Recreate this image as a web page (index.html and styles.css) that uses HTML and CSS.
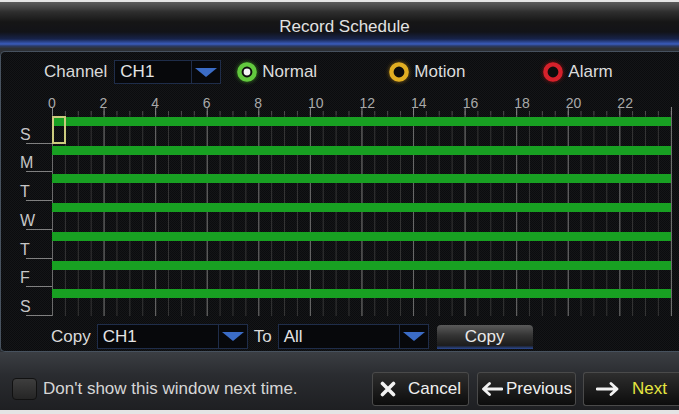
FILE: index.html
```html
<!DOCTYPE html>
<html lang="en">
  <head>
    <meta charset="UTF-8" />
    <meta name="viewport" content="width=device-width, initial-scale=1.0" />
    <title>Record Schedule</title>
    <link rel="stylesheet" href="styles.css">
  </head>
  <body>
    <div class="screen">
      <div class="title-bar">Record Schedule</div>

      <div class="panel">
        <div class="channel-row">
          <span class="label">Channel</span>
          <div class="select channel-select">
            <span class="value">CH1</span>
            <span class="arrow">
              <svg width="22" height="9" viewBox="0 0 22 9"><polygon points="0,0 22,0 11,9" fill="#3b6cc6" /></svg>
            </span>
          </div>

          <div class="mode mode-normal">
            <svg width="22" height="22" viewBox="0 0 22 22">
              <circle cx="11" cy="11" r="7.6" fill="#0c0c0c" stroke="#62c93e" stroke-width="4.4" />
              <circle cx="11" cy="11" r="3.4" fill="#f4f4f4" />
            </svg>
            <span>Normal</span>
          </div>
          <div class="mode mode-motion">
            <svg width="22" height="22" viewBox="0 0 22 22">
              <circle cx="11" cy="11" r="7.6" fill="#0c0c0c" stroke="#e1ae22" stroke-width="4.4" />
            </svg>
            <span>Motion</span>
          </div>
          <div class="mode mode-alarm">
            <svg width="22" height="22" viewBox="0 0 22 22">
              <circle cx="11" cy="11" r="7.6" fill="#0c0c0c" stroke="#d5212b" stroke-width="4.4" />
            </svg>
            <span>Alarm</span>
          </div>
        </div>

        <div class="scale-row">
          <div class="day-col"></div>
          <div class="scale">
            <span>0</span><span>2</span><span>4</span><span>6</span><span>8</span>
            <span class="wide">10</span><span class="wide">12</span><span class="wide">14</span>
            <span class="wide">16</span><span class="wide">18</span><span class="wide">20</span>
            <span class="wide">22</span>
          </div>
        </div>

        <div class="schedule">
          <div class="day-row">
            <div class="day"><span>S</span></div>
            <div class="slots"><div class="bar"></div><div class="cursor"></div></div>
          </div>
          <div class="day-row">
            <div class="day"><span>M</span></div>
            <div class="slots"><div class="bar"></div></div>
          </div>
          <div class="day-row">
            <div class="day"><span>T</span></div>
            <div class="slots"><div class="bar"></div></div>
          </div>
          <div class="day-row">
            <div class="day"><span>W</span></div>
            <div class="slots"><div class="bar"></div></div>
          </div>
          <div class="day-row">
            <div class="day"><span>T</span></div>
            <div class="slots"><div class="bar"></div></div>
          </div>
          <div class="day-row">
            <div class="day"><span>F</span></div>
            <div class="slots"><div class="bar"></div></div>
          </div>
          <div class="day-row">
            <div class="day"><span>S</span></div>
            <div class="slots"><div class="bar"></div></div>
          </div>
        </div>

        <div class="copy-row">
          <span class="label">Copy</span>
          <div class="select copy-select">
            <span class="value">CH1</span>
            <span class="arrow">
              <svg width="22" height="9" viewBox="0 0 22 9"><polygon points="0,0 22,0 11,9" fill="#3b6cc6" /></svg>
            </span>
          </div>
          <span class="label to-label">To</span>
          <div class="select copy-select">
            <span class="value">All</span>
            <span class="arrow">
              <svg width="22" height="9" viewBox="0 0 22 9"><polygon points="0,0 22,0 11,9" fill="#3b6cc6" /></svg>
            </span>
          </div>
          <button class="copy-btn">Copy</button>
        </div>
      </div>

      <div class="footer">
        <span class="checkbox"></span>
        <span class="footer-text">Don't show this window next time.</span>

        <div class="actions">
          <button class="btn btn-cancel">
            <svg width="16" height="16" viewBox="0 0 16 16"><path d="M2.5 2.5L13.5 13.5M13.5 2.5L2.5 13.5" stroke="#f2f2f2" stroke-width="3.6" stroke-linecap="round" /></svg>
            Cancel
          </button>
          <button class="btn btn-prev">
            <svg width="22" height="14" viewBox="0 0 22 14"><path d="M21 7H3M8.5 1.5L2.5 7l6 5.5" stroke="#f2f2f2" stroke-width="2.8" fill="none" stroke-linecap="round" stroke-linejoin="round" /></svg>
            Previous
          </button>
          <button class="btn btn-next">
            <svg width="24" height="14" viewBox="0 0 24 14"><path d="M1 7h20M15 1.5L21 7l-6 5.5" stroke="#f2f2f2" stroke-width="2.8" fill="none" stroke-linecap="round" stroke-linejoin="round" /></svg>
            <span class="next-text">Next</span>
          </button>
        </div>
      </div>
    </div>
  </body>
</html>
```

FILE: styles.css
```css
* {
  box-sizing: border-box;
}

body {
  margin: 0;
  height: 414px;
  overflow: hidden;
  background-color: #e4e4e4;
  font-family: "Liberation Sans", Arial, sans-serif;
  color: #d8d8d8;
}

.screen {
  width: 679px;
  height: 408px;
  margin-top: 2px;
  overflow: hidden;
  background-color: #2d3035;
}

.title-bar {
  height: 46px;
  padding: 15px 0 0 10px;
  line-height: 20px;
  text-align: center;
  font-size: 17px;
  color: #e2e2e2;
  background: linear-gradient(
    to bottom,
    #5c5c5c 0,
    #2e2e2e 10px,
    #161616 20px,
    #121318 30px,
    #17234a 37px,
    #3a5cbc 42px,
    #2a3a66 44px,
    #30343b 46px
  );
}

.panel {
  margin-top: 3px;
  padding: 8px 0 2px 0;
  border: 1px solid #47525f;
  border-right: none;
  border-radius: 5px 0 0 5px;
  background-color: #0e0f11;
  background-image: repeating-conic-gradient(#0b0c0e 0 25%, #141517 0 50%);
  background-size: 2px 2px;
}

.label {
  font-size: 17px;
  color: #dadada;
}

/* channel + legend */
.channel-row {
  display: flex;
  align-items: center;
  height: 24px;
  padding-left: 43px;
}

.select {
  display: flex;
  align-items: stretch;
  border: 1px solid #1f2d4a;
  background-color: #07080b;
  font-size: 17px;
  color: #e4e4e4;
}

.select .value {
  flex: 1;
  display: flex;
  align-items: center;
  padding-left: 5px;
}

.select .arrow {
  width: 29px;
  display: flex;
  align-items: center;
  justify-content: center;
  border-left: 1px solid #1f2d4a;
}

.channel-select {
  width: 107px;
  height: 24px;
  margin-left: 7px;
}

.mode {
  display: flex;
  align-items: center;
  gap: 4px;
  font-size: 17px;
  color: #dcdcdc;
}

.mode svg {
  flex-shrink: 0;
}

.mode-normal {
  width: 152px;
  margin-left: 15px;
}

.mode-normal svg {
  filter: drop-shadow(0 0 2px #3c8c20);
}

.mode-motion {
  width: 154px;
}

.mode-motion svg {
  filter: drop-shadow(0 0 2px #8a6410);
}

.mode-alarm svg {
  filter: drop-shadow(0 0 2px #8a1010);
}

/* hour scale */
.scale-row {
  display: flex;
  height: 31px;
}

.day-col {
  width: 51px;
}

.scale {
  width: 620px;
  display: flex;
  padding-top: 11px;
  border-right: 1px solid transparent;
  font-size: 14px;
  line-height: 16px;
  color: #a9a9a9;
  background-image:
    linear-gradient(to right, #858585 1px, transparent 1px),
    linear-gradient(to right, #4e4e4e 1px, transparent 1px);
  background-size: calc(100% / 12) 8px, calc(100% / 48) 4px;
  background-position: 0 100%, 0 100%;
  background-repeat: repeat-x;
}

.scale span {
  flex: 0 0 calc(100% / 12);
  text-indent: -4px;
}

.scale span.wide {
  text-indent: -2px;
}

/* week grid */
.schedule {
  height: 201px;
  display: grid;
  grid-template-rows: repeat(7, 1fr);
}

.day-row {
  display: grid;
  grid-template-columns: 51px 620px;
}

.day {
  display: flex;
  align-items: flex-end;
  padding: 0 0 1px 19px;
  font-size: 16px;
  line-height: 16px;
  color: #c6c6c6;
  background: linear-gradient(#808080, #808080) no-repeat right bottom / 26px 1px;
}

.slots {
  position: relative;
  padding-top: 2px;
  border-right: 1px solid #6e6e6e;
  background-image:
    linear-gradient(to right, #6a6a6a 1px, transparent 1px),
    linear-gradient(to right, #353535 1px, transparent 1px);
  background-size: calc(100% / 12) 100%, calc(100% / 48) 100%;
}

.bar {
  height: 9px;
  background-color: #18a022;
}

.cursor {
  position: absolute;
  left: 0;
  top: 1px;
  bottom: 0;
  width: 14px;
  border: 2px solid #cccb7e;
}

/* copy row */
.copy-row {
  display: flex;
  align-items: center;
  height: 25px;
  margin-top: 8px;
  padding-left: 50px;
}

.copy-select {
  width: 151px;
  height: 25px;
  margin-left: 6px;
}

.to-label {
  margin-left: 6px;
}

.copy-btn {
  width: 96px;
  height: 24px;
  margin-left: 8px;
  padding: 0;
  border: none;
  border-radius: 4px 4px 0 0;
  font-family: inherit;
  font-size: 17px;
  color: #e8e8e8;
  background: linear-gradient(to bottom, #5a5a5a 0, #333 45%, #1c1c1c 85%, #2c4a96 100%);
}

/* footer */
.footer {
  height: 58px;
  display: flex;
  align-items: center;
  padding: 15px 0 0 12px;
  background: linear-gradient(to bottom, #3b3e43 0, #2a2c30 40%, #1e1f22 100%);
}

.checkbox {
  width: 25px;
  height: 22px;
  border: 1px solid #111;
  border-radius: 4px;
  background: linear-gradient(to bottom, #3e3e3e, #252525);
}

.footer-text {
  margin-left: 6px;
  font-size: 17px;
  color: #d6d6d6;
}

.actions {
  display: flex;
  gap: 8px;
  margin-left: auto;
}

.btn {
  height: 34px;
  display: flex;
  align-items: center;
  justify-content: center;
  gap: 10px;
  padding: 0;
  border: 1px solid #4a4a4a;
  border-radius: 3px;
  font-family: inherit;
  font-size: 17px;
  color: #f0f0f0;
  background: linear-gradient(to bottom, #2e2e2e, #0c0c0c);
}

.btn-cancel {
  width: 97px;
  gap: 12px;
}

.btn-prev {
  width: 99px;
  gap: 3px;
}

.btn-next {
  width: 96px;
  margin-left: -1px;
  gap: 12px;
  border-right: none;
  border-radius: 3px 0 0 3px;
}

.next-text {
  color: #e6e640;
}
```
